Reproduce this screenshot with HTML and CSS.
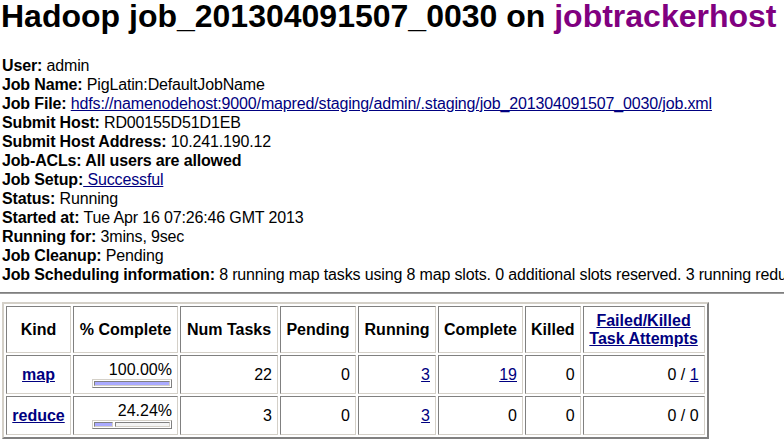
FILE: index.html
```html
<!DOCTYPE html>
<html>
<head>
<meta charset="utf-8">
<title>Hadoop job_201304091507_0030 on jobtrackerhost</title>
<link rel="stylesheet" href="styles.css">
</head>
<body>
<h1 class="title">Hadoop job_201304091507_0030 on <a class="host" href="#">jobtrackerhost</a></h1>
<div class="info">
  <div class="row"><b>User:</b> admin</div>
  <div class="row"><b>Job Name:</b> PigLatin:DefaultJobName</div>
  <div class="row"><b>Job File:</b> <a class="lnk" href="#">hdfs://namenodehost:9000/mapred/staging/admin/.staging/job_201304091507_0030/job.xml</a></div>
  <div class="row"><b>Submit Host:</b> RD00155D51D1EB</div>
  <div class="row"><b>Submit Host Address:</b> 10.241.190.12</div>
  <div class="row"><b>Job-ACLs: All users are allowed</b></div>
  <div class="row"><b>Job Setup:</b><a class="lnk" href="#"> Successful</a></div>
  <div class="row"><b>Status:</b> Running</div>
  <div class="row"><b>Started at:</b> Tue Apr 16 07:26:46 GMT 2013</div>
  <div class="row"><b>Running for:</b> 3mins, 9sec</div>
  <div class="row"><b>Job Cleanup:</b> Pending</div>
  <div class="row"><b>Job Scheduling information:</b> 8 running map tasks using 8 map slots. 0 additional slots reserved. 3 running reduce tasks using 3 reduce slots. 0 additional slots reserved.</div>
</div>
<hr class="rule">
<table class="tasks">
  <tr>
    <th class="c-kind">Kind</th>
    <th class="c-pct">% Complete</th>
    <th class="c-num">Num Tasks</th>
    <th class="c-pend">Pending</th>
    <th class="c-run">Running</th>
    <th class="c-comp">Complete</th>
    <th class="c-kill">Killed</th>
    <th class="c-fail"><a class="lnk" href="#">Failed/Killed<br>Task Attempts</a></th>
  </tr>
  <tr>
    <td class="kind"><a class="lnk" href="#">map</a></td>
    <td class="num">100.00%
      <div class="barwrap"><div class="bar"><div class="seg filled" style="flex-grow:100"></div></div></div>
    </td>
    <td class="num">22</td>
    <td class="num">0</td>
    <td class="num"><a class="lnk" href="#">3</a></td>
    <td class="num"><a class="lnk" href="#">19</a></td>
    <td class="num">0</td>
    <td class="num">0 / <a class="lnk" href="#">1</a></td>
  </tr>
  <tr>
    <td class="kind"><a class="lnk" href="#">reduce</a></td>
    <td class="num">24.24%
      <div class="barwrap"><div class="bar"><div class="seg filled" style="flex-grow:24.24"></div><div class="seg empty" style="flex-grow:75.76"></div></div></div>
    </td>
    <td class="num">3</td>
    <td class="num">0</td>
    <td class="num"><a class="lnk" href="#">3</a></td>
    <td class="num">0</td>
    <td class="num">0</td>
    <td class="num">0 / 0</td>
  </tr>
</table>
</body>
</html>
```
FILE: styles.css
```css
html {
  overflow: hidden;
}
body {
  margin: 0;
  background: #ffffff;
  color: #000000;
  font-family: "Liberation Sans", Arial, sans-serif;
  font-size: 16px;
}
.title {
  margin: 0 0 24px;
  padding-left: 1px;
  font-size: 32px;
  line-height: 32px;
  font-weight: bold;
  white-space: nowrap;
}
.host {
  color: #800080;
  text-decoration: none;
}
.lnk {
  color: #000080;
  text-decoration: underline;
}
.info {
  padding-left: 2px;
  line-height: 19px;
  letter-spacing: -0.15px;
  white-space: nowrap;
}
.rule {
  margin: 8px 0 0;
  height: 0;
  border: 0;
  border-top: 1px solid #7f7f7f;
  border-bottom: 1px solid #9a9a9a;
}
.tasks {
  margin: 8px 0 0 2px;
  border-collapse: separate;
  border-spacing: 2px;
  border: 2px solid;
  border-color: #d4d0c8 #808080 #808080 #d4d0c8;
  font-size: 16px;
  line-height: 18px;
}
.tasks th,
.tasks td {
  box-sizing: border-box;
  border: 1px solid;
  border-color: #808080 #d4d0c8 #d4d0c8 #808080;
  vertical-align: middle;
  white-space: nowrap;
}
.tasks th {
  padding: 5px 5px 4px;
  font-weight: bold;
  text-align: center;
}
.tasks td {
  padding: 5px 5px 5px;
}
.c-kind { width: 65px; }
.c-pct { width: 105px; }
.c-num { width: 98px; }
.c-pend { width: 76px; }
.c-run { width: 78px; }
.c-comp { width: 85px; }
.c-kill { width: 55px; }
.c-fail { width: 122px; }
.tasks td.kind {
  text-align: center;
  font-weight: bold;
}
.tasks td.num {
  text-align: right;
}
.barwrap {
  display: flex;
  justify-content: flex-end;
}
.bar {
  box-sizing: border-box;
  display: flex;
  gap: 2px;
  width: 80px;
  height: 9px;
  padding: 1px;
  border: 1px solid;
  border-color: #d4d0c8 #808080 #808080 #d4d0c8;
}
.seg {
  flex-basis: 0;
  border: 1px solid;
  border-color: #808080 #d4d0c8 #d4d0c8 #808080;
}
.filled {
  background: #aaaaff;
}
.empty {
  background: #f4f4f4;
}
```
